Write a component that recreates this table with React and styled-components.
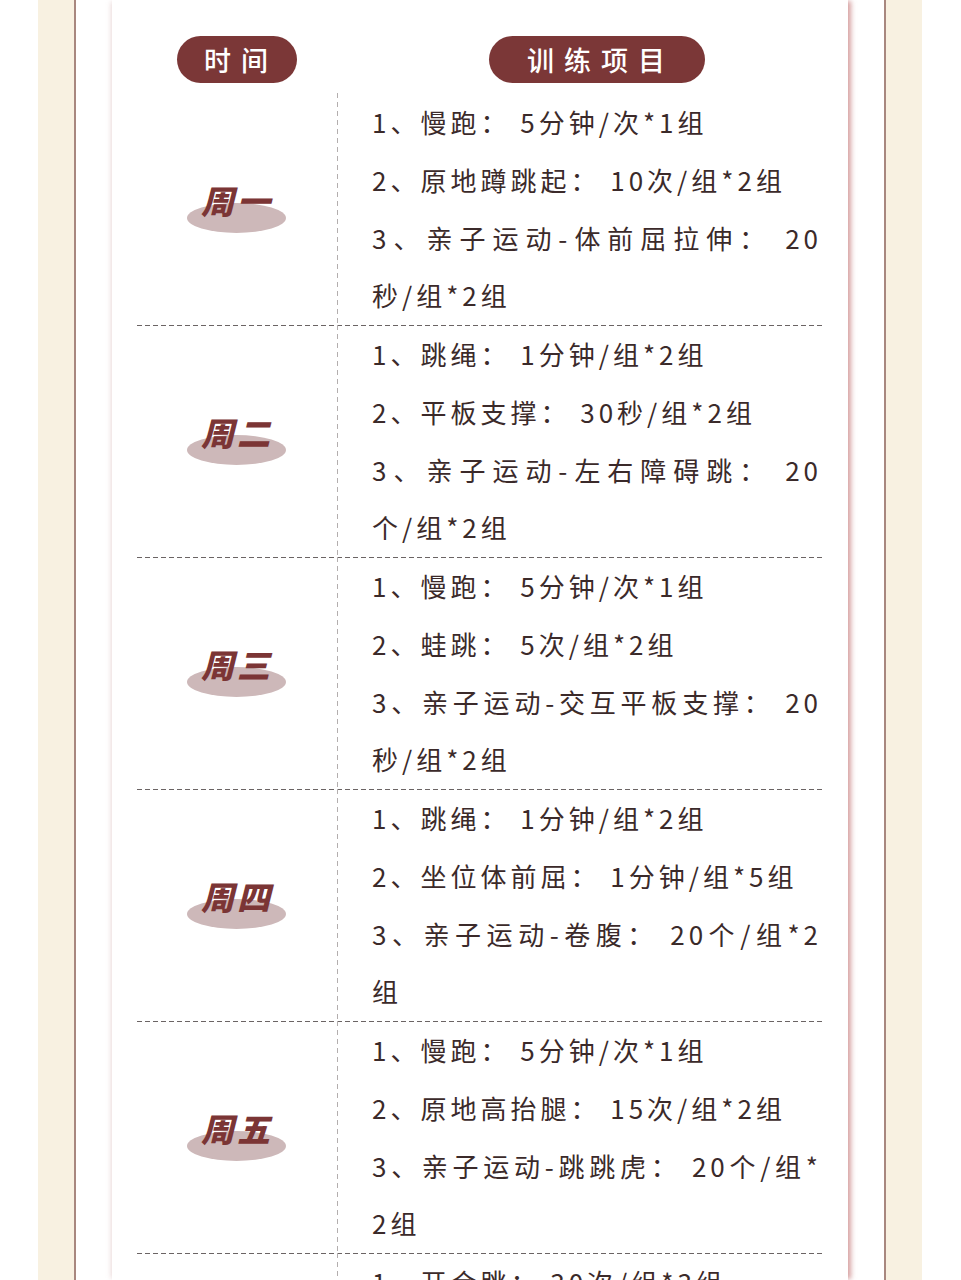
import React from "react";
import styled, { createGlobalStyle } from "styled-components";

const schedule = [
  {
    day: "周一",
    items: [
      "1、慢跑： 5分钟/次*1组",
      "2、原地蹲跳起： 10次/组*2组",
      "3、亲子运动-体前屈拉伸： 20秒/组*2组",
    ],
  },
  {
    day: "周二",
    items: [
      "1、跳绳： 1分钟/组*2组",
      "2、平板支撑： 30秒/组*2组",
      "3、亲子运动-左右障碍跳： 20个/组*2组",
    ],
  },
  {
    day: "周三",
    items: [
      "1、慢跑： 5分钟/次*1组",
      "2、蛙跳： 5次/组*2组",
      "3、亲子运动-交互平板支撑： 20秒/组*2组",
    ],
  },
  {
    day: "周四",
    items: [
      "1、跳绳： 1分钟/组*2组",
      "2、坐位体前屈： 1分钟/组*5组",
      "3、亲子运动-卷腹： 20个/组*2组",
    ],
  },
  {
    day: "周五",
    items: [
      "1、慢跑： 5分钟/次*1组",
      "2、原地高抬腿： 15次/组*2组",
      "3、亲子运动-跳跳虎： 20个/组*\u200B2\u2060组",
    ],
  },
  {
    day: "周六",
    items: ["1、开合跳： 30次/组*3组"],
  },
];

const App = () => (
  <>
    <GlobalStyle />
    <Page>
      <Frame>
        <Panel>
          <Card>
            <Header>
              <HeadCell>
                <Pill>时间</Pill>
              </HeadCell>
              <HeadCell $offset>
                <Pill $wide>训练项目</Pill>
              </HeadCell>
            </Header>
            {schedule.map((row, i) => (
              <Row key={row.day} $first={i === 0}>
                <DayCell>
                  <DayLabel>
                    <DayText>{row.day}</DayText>
                  </DayLabel>
                </DayCell>
                <ItemCell>
                  {row.items.map((item) => (
                    <Item key={item}>{item}</Item>
                  ))}
                </ItemCell>
              </Row>
            ))}
          </Card>
        </Panel>
      </Frame>
    </Page>
  </>
);

export default App;

const GlobalStyle = createGlobalStyle`
  html, body {
    margin: 0;
    padding: 0;
    background: #fff;
  }
  body {
    width: 961px;
    height: 1280px;
    overflow: hidden;
    font-family: "Noto Sans CJK SC", "Noto Sans", sans-serif;
  }
`;

const Page = styled.div`
  display: flex;
  height: 1280px;
  padding-left: 38px;
  overflow: hidden;
`;

const Frame = styled.div`
  width: 884px;
  box-sizing: border-box;
  padding: 0 36px;
  background: #f8f1e1;
`;

const Panel = styled.div`
  height: 100%;
  box-sizing: border-box;
  padding: 0 36px;
  background: #fff;
  border-left: 2px solid #a8877f;
  border-right: 2px solid #a8877f;
`;

const Card = styled.div`
  height: 100%;
  box-sizing: border-box;
  padding: 0 26px 0 25px;
  background: #fff;
  box-shadow: 4px 0 5px -1px rgba(196, 120, 120, 0.7),
    -3px 0 5px -2px rgba(196, 150, 150, 0.35);
`;

const Header = styled.div`
  display: grid;
  grid-template-columns: 200px 1fr;
  padding-top: 36px;
  margin-bottom: 10px;
`;

const HeadCell = styled.div`
  display: flex;
  justify-content: center;
  padding-left: ${(p) => (p.$offset ? "35px" : "0")};
`;

const Pill = styled.div`
  width: ${(p) => (p.$wide ? "216px" : "120px")};
  height: 47px;
  box-sizing: border-box;
  padding-left: 8px;
  border-radius: 24px;
  background: #7b3737;
  color: #fff;
  font-size: 27px;
  font-weight: 500;
  letter-spacing: 10px;
  display: flex;
  align-items: center;
  justify-content: center;
`;

const Row = styled.div`
  display: grid;
  grid-template-columns: 200px 1fr;
  min-height: 232px;
  background: ${(p) =>
    p.$first
      ? "none"
      : "repeating-linear-gradient(90deg, #6b6464 0 5px, transparent 5px 8px) top left / 100% 1px no-repeat"};
`;

const DayCell = styled.div`
  display: flex;
  align-items: center;
  justify-content: center;
`;

const DayLabel = styled.div`
  position: relative;
  isolation: isolate;
  padding-bottom: 18px;

  &::before {
    content: "";
    position: absolute;
    top: 20px;
    left: 50%;
    width: 99px;
    height: 30px;
    margin-left: -50px;
    border-radius: 50%;
    background: #cdb8b9;
    z-index: -1;
  }
`;

const DayText = styled.span`
  display: block;
  font-size: 33px;
  line-height: 34px;
  font-weight: 900;
  font-style: italic;
  letter-spacing: 3px;
  color: #7b3535;
`;

const ItemCell = styled.div`
  padding-left: 35px;
  background: repeating-linear-gradient(
      180deg,
      #b3aeae 0 5px,
      transparent 5px 9px
    )
    top left / 1px 100% no-repeat;
`;

const Item = styled.div`
  font-size: 26px;
  line-height: 57.75px;
  letter-spacing: 4px;
  color: #3b2a2a;
  text-align: justify;
`;
